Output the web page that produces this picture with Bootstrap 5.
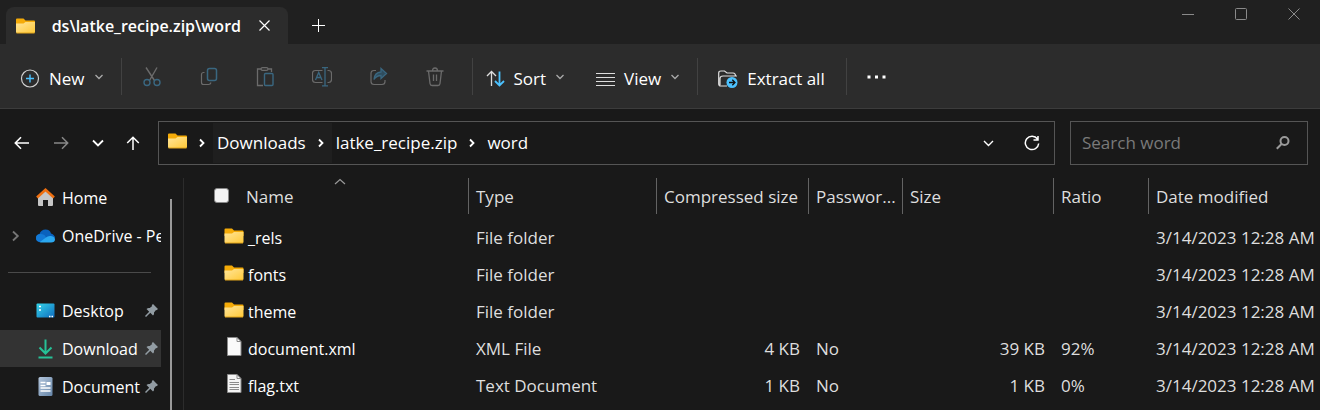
<!DOCTYPE html>
<html lang="en" data-bs-theme="dark">
<head>
<meta charset="utf-8">
<meta name="viewport" content="width=device-width, initial-scale=1">
<title>latke_recipe.zip\word</title>
<link href="https://cdn.jsdelivr.net/npm/bootstrap@5.3.0/dist/css/bootstrap.min.css" rel="stylesheet">
<style>
  body { background: #191919; color: #fff; font-family: "Open Sans", "Noto Sans", sans-serif; font-size: 17px; line-height: 24px; overflow: hidden; }
  svg { display: block; flex: none; fill: none; stroke: currentColor; }
  .plain-btn { background: none; border: 0; padding: 0; color: inherit; display: flex; align-items: center; justify-content: center; }
  .titlebar { background: #202020; height: 44px; padding-left: 6px; }
  .file-tab { background: #2c2c2c; border-radius: 8px 8px 0 0; width: 282px; height: 37px; padding: 0 18px 0 10px; }
  .tab-label { width: 194px; height: 24px; margin-left: 12px; font-weight: 600; font-size: 16px; }
  .win-controls { color: #8a8a8a; height: 28px; }
  .win-controls .plain-btn { width: 53px; }
  .commands { background: #2c2c2c; height: 65px; border-bottom: 1px solid #3c3c3c; padding: 5px 0 0 20px; }
  .commands .rule { width: 1px; height: 37px; background: #424242; margin: -4px 0 0 17px; }
  .commands .icon-cmds + .rule { margin-left: 0; }
  .commands .rule.wide { margin-left: 21px; }
  .cmd { gap: 9px; height: 36px; }
  .rule + .cmd { margin-left: 20px; }
  .rule + .cmd.sort { margin-left: 13px; }
  .cmd + .cmd { margin-left: 31px; }
  .icon-cmds { width: 350px; padding: 0 8px 0 2px; color: #6b6b6b; }
  .icon-cmds .plain-btn { flex: 1; height: 36px; padding-bottom: 4px; }
  .accent { stroke: #4cc2ff; }
  .dimmed { stroke: #3a6780; }
  .more { color: #aaa; margin-bottom: 4px; }
  .navrow { height: 69px; padding: 12px 12px 0 12px; }
  .nav-arrows { width: 146px; height: 44px; }
  .nav-arrows .plain-btn { width: 18px; margin-right: 22px; }
  .nav-arrows .recent { width: 12px; margin: 0 20px 0 0; }
  .nav-arrows .off { color: #888; }
  .box { border: 1px solid #555; height: 44px; }
  .address { padding-left: 9px; }
  .address .refresh { margin: 0 14px 0 30px; }
  .crumb { color: #fff; text-decoration: none; padding: 0 4px; height: 40px; display: flex; align-items: center; }
  .crumb.lit, .crumb-sep.lit { background: #1f1f1f; }
  .crumb-sep { width: 22px; height: 40px; display: flex; align-items: center; justify-content: center; }
  .search { width: 238px; margin-left: 15px; }
  .search input { background: none; border: 0; outline: 0; color: #fff; width: 180px; padding: 0 0 0 11px; }
  .search input::placeholder { color: #7a7a7a; opacity: 1; }
  .search svg { margin-right: 17px; color: #9a9a9a; }
  .sidebar { flex: none; width: 183px; font-size: 16px; }
  .side-list { width: 161px; padding-top: 1px; }
  .side-item { height: 37px; margin-bottom: 1px; color: #fff; text-decoration: none; display: flex; align-items: center; padding-left: 8px; }
  .side-item.chosen { background: #333; }
  .side-item .twist { width: 28px; color: #777; padding-left: 4px; }
  .side-item .glyph { width: 20px; margin-right: 6px; }
  .side-item .words { flex: 1; min-width: 0; overflow: hidden; white-space: nowrap; }
  .side-item .pin { margin: 0 3px; fill: #929ca3; stroke: none; }
  .side-rule { border: 0; border-top: 1px solid #4a4a4a; opacity: 1; margin: 18px 10px 19px 8px; }
  .thumb { width: 2px; background: #9a9a9a; margin: 21px 0 0 9px; }
  .files { border-left: 1px solid #2c2c2c; }
  .file-table { table-layout: fixed; width: 100%; color: #dedede; }
  .file-table th { font-weight: 400; height: 36px; padding: 0; }
  .head-cell { height: 36px; padding: 1px 0 0 7px; border-right: 1px solid #636363; white-space: nowrap; display: flex; align-items: center; }
  .file-table th:last-child .head-cell { border: 0; }
  .file-table tbody::before { content: ""; display: block; height: 5px; }
  .file-table td { height: 37px; padding: 0 7px; white-space: nowrap; }
  .file-table td:first-child { color: #fff; padding-left: 40px; font-size: 16px; }
  .file-table .size-cell { text-align: right; padding-right: 9px; }
  .col-name { width: 285px; } .col-type { width: 188px; } .col-packed { width: 152px; } .col-lock { width: 94px; } .col-size { width: 151px; } .col-ratio { width: 95px; }
  .head-cell.name-head { padding-left: 30px; }
  .pick { appearance: none; width: 15px; height: 15px; border: 1px solid #888; border-radius: 3px; background: #f3f3f3; margin: 0 17px 2px 0; }
  .sort-mark { left: 150px; top: 0; }
</style>
</head>
<body class="vh-100 d-flex flex-column">

<svg width="0" height="0" class="position-absolute" aria-hidden="true">
  <defs>
    <linearGradient id="gold" x1="0" y1="0" x2="1" y2="1"><stop offset="0" stop-color="#ffe59a"/><stop offset="1" stop-color="#ffc938"/></linearGradient>
    <linearGradient id="screen" x1="0" y1="0" x2="1" y2="1"><stop offset="0" stop-color="#35d5ea"/><stop offset="1" stop-color="#0f6cbf"/></linearGradient>
    <linearGradient id="paper" x1="0" y1="0" x2="1" y2="1"><stop offset="0" stop-color="#b4c6dc"/><stop offset="1" stop-color="#6585a8"/></linearGradient>
    <symbol id="folder" viewBox="0 0 19 16"><path d="M0 1.500Q0 .5 1 .5h6.500L9.500 2.500H18q1 0 1 1V8H0z" fill="#f5ab08" stroke="none"/><path d="M0 5.500h7.500L9.500 4H19v10q0 1-1 1H1q-1 0-1-1z" fill="url(#gold)" stroke="none"/><path d="M.5 15h18" stroke="#e3a61a"/></symbol>
    <symbol id="chev" viewBox="0 0 10 6"><path d="M1.500 1 5 4.500 8.500 1" stroke-width="1.300"/></symbol>
    <symbol id="angle" viewBox="0 0 6 10"><path d="M1 1.500 4.500 5 1 8.500" stroke-width="1.800"/></symbol>
    <symbol id="pin" viewBox="0 0 13 13"><path d="M8 0 13 5 11.500 6.300 11 6 9 8.500Q9.500 10.500 8 11.500L5.300 8.800 1 13 0 12 4.200 7.700 1.500 5Q3 3.500 4.800 4L7.200 2 6.700 1.300z"/></symbol>
  </defs>
</svg>

<header class="titlebar d-flex align-items-end">
  <div class="file-tab d-flex align-items-center">
    <svg width="19" height="16"><use href="#folder"/></svg>
    <div class="tab-label d-flex justify-content-end overflow-hidden text-nowrap me-auto"><span>ds\latke_recipe.zip\word</span></div>
    <button class="plain-btn" aria-label="Close tab"><svg width="11" height="11"><path d="M.5.5l10 10M10.500.5l-10 10" stroke-width="1.200"/></svg></button>
  </div>
  <button class="plain-btn ms-4 mb-2 pb-1" aria-label="New tab"><svg width="13" height="13"><path d="M6.500 0v13M0 6.500h13"/></svg></button>
  <div class="win-controls d-flex align-self-start ms-auto">
    <button class="plain-btn" aria-label="Minimize"><svg width="12" height="12"><path d="M0 6.500h12"/></svg></button>
    <button class="plain-btn" aria-label="Maximize"><svg width="12" height="12"><rect x=".5" y=".5" width="11" height="11" rx="1"/></svg></button>
    <button class="plain-btn" aria-label="Close"><svg width="12" height="12"><path d="M.5.5l11 11M11.500.5l-11 11"/></svg></button>
  </div>
</header>

<div class="commands d-flex align-items-center">
  <button class="plain-btn cmd">
    <svg width="20" height="20"><circle cx="10" cy="9.500" r="8.500" stroke="#d0d0d0" stroke-width="1.200"/><path d="M10 5.500v8M6 9.500h8" class="accent" stroke-width="1.400"/></svg>
    New
    <svg width="10" height="6" class="more"><use href="#chev"/></svg>
  </button>
  <span class="rule"></span>
  <div class="icon-cmds d-flex">
    <button class="plain-btn" aria-label="Cut"><svg width="18" height="20"><path d="M3 .5 11.500 13.500M14 .5 6.500 13.500" stroke-width="1.400"/><g class="dimmed" stroke-width="1.400"><circle cx="4" cy="15.500" r="3"/><circle cx="14" cy="15.500" r="3"/></g></svg></button>
    <button class="plain-btn" aria-label="Copy"><svg width="18" height="20"><path d="M4.500 5.500H3.500a2 2 0 0 0-2 2v8q0 2 2 2h5q2 0 2.500-2" stroke-width="1.200"/><rect x="7.500" y="1.500" width="9" height="12" rx="2" class="dimmed" stroke-width="1.500"/></svg></button>
    <button class="plain-btn" aria-label="Paste"><svg width="18" height="20"><path d="M4.500 2H1.500v16.500H7M12 2h3.500v3M5 2Q5 .7 6.500.7h4Q12 .7 12 2T10.500 3.300h-4Q5 3.300 5 2z" stroke-width="1.300"/><rect x="8.500" y="6.500" width="8.500" height="12" rx="1" class="dimmed" stroke-width="1.400"/></svg></button>
    <button class="plain-btn" aria-label="Rename"><svg width="20" height="20"><path d="M10.500 3.500H3.500q-3 0-3 3v6q0 3 3 3h7M15.500 3.500h1q3 0 3 3v6q0 3-3 3h-1" stroke-width="1.200"/><path d="M13 1v17.500M10 .7h6M10 18.800h6M3.500 13 6.700 5.500 10 13M4.800 10.500h3.800" class="dimmed" stroke-width="1.300"/></svg></button>
    <button class="plain-btn" aria-label="Share"><svg width="18" height="20"><path d="M6 3.500H4q-3 0-3 3v8q0 3 3 3h8q3 0 3-3V13" stroke-width="1.200"/><path d="M11 5V1.500l5.500 5-5.500 5V8.500Q6.500 8.500 4 12.500 4.500 5.500 11 5z" class="dimmed" fill="#2f4d5e" stroke-width="1.300"/></svg></button>
    <button class="plain-btn" aria-label="Delete"><svg width="18" height="20"><path d="M.5 4h17M6.500 4Q6.500 1 9 1t2.500 3M2.500 4 4 16.500q.2 2 2 2h6q1.800 0 2-2L15.500 4M7.500 7.500V14M10.500 7.500V14" stroke-width="1.300"/></svg></button>
  </div>
  <span class="rule"></span>
  <button class="plain-btn cmd sort">
    <svg width="19" height="18"><path d="M5.500 16V2M1 6l4.500-4.500L10 6" stroke="#ddd" stroke-width="1.300"/><path d="M13.500 1.500V15M9 11l4.500 4.500L18 11" class="accent" stroke-width="1.800"/></svg>
    Sort
    <svg width="10" height="6" class="more"><use href="#chev"/></svg>
  </button>
  <button class="plain-btn cmd">
    <svg width="19" height="14"><path d="M0 1.500h19M0 5.500h19M0 9.500h19M0 13.500h19" stroke="#ddd"/></svg>
    View
    <svg width="10" height="6" class="more"><use href="#chev"/></svg>
  </button>
  <span class="rule"></span>
  <button class="plain-btn cmd">
    <svg width="20" height="18"><path d="M9 16H3Q.7 16 .7 14V3Q.7 1 3 1h3.500l2.500 2h6q2.500 0 2.500 3M2 15V8.500Q2 6 5 6h14" stroke="#ddd" stroke-width="1.200"/><circle cx="14" cy="12.500" r="5.500" fill="#4cc2ff" stroke="none"/><path d="M11 12.500h6M14.300 9.800 17 12.500l-2.700 2.700" stroke="#111" stroke-width="1.300"/></svg>
    Extract all
  </button>
  <span class="rule wide"></span>
  <button class="plain-btn cmd" aria-label="See more"><svg width="20" height="4" class="mb-1"><path d="M.5 2h3M8 2h3M15.500 2h3" stroke="#fff" stroke-width="3"/></svg></button>
</div>

<div class="navrow d-flex">
  <div class="nav-arrows d-flex align-items-center">
    <button class="plain-btn" aria-label="Back"><svg width="15" height="14"><path d="M15 7H1.500M7 1.200 1.300 7 7 12.800" stroke-width="1.600"/></svg></button>
    <button class="plain-btn off" aria-label="Forward"><svg width="15" height="14"><path d="M0 7h13.500M8 1.200 13.700 7 8 12.800" stroke-width="1.500"/></svg></button>
    <button class="plain-btn recent" aria-label="Recent locations"><svg width="12" height="8"><path d="M1 1.500 6 6.500l5-5" stroke-width="1.800"/></svg></button>
    <button class="plain-btn me-0" aria-label="Up"><svg width="14" height="14"><path d="M7 14V1.500M1.200 7 7 1.200 12.800 7" stroke-width="1.500"/></svg></button>
  </div>
  <nav class="box address flex-fill d-flex align-items-center" aria-label="Address">
    <svg width="19" height="16" class="mb-1"><use href="#folder"/></svg>
    <span class="crumb-sep ms-1"><svg width="6" height="10"><use href="#angle"/></svg></span>
    <a class="crumb lit" href="#">Downloads</a>
    <span class="crumb-sep lit"><svg width="6" height="10"><use href="#angle"/></svg></span>
    <a class="crumb" href="#">latke_recipe.zip</a>
    <span class="crumb-sep"><svg width="6" height="10"><use href="#angle"/></svg></span>
    <a class="crumb" href="#">word</a>
    <button class="plain-btn ms-auto" aria-label="Previous locations"><svg width="11" height="7"><path d="M1 1 5.500 5.500 10 1" stroke-width="1.400"/></svg></button>
    <button class="plain-btn refresh" aria-label="Refresh"><svg width="16" height="16"><path d="M13.500 4A6.700 6.700 0 1 0 14.700 8.500M14 1v4h-4.500" stroke-width="1.500"/></svg></button>
  </nav>
  <form class="search box d-flex align-items-center justify-content-between">
    <input type="text" placeholder="Search word" aria-label="Search word">
    <svg width="14" height="14"><circle cx="8.500" cy="5" r="4" stroke-width="2"/><path d="M5.500 8 .8 12.800" stroke-width="2"/></svg>
  </form>
</div>

<main class="flex-fill d-flex">
  <aside class="sidebar d-flex">
    <nav class="side-list" aria-label="Folders">
      <a class="side-item" href="#"><span class="twist"></span><span class="glyph"><svg width="19" height="19"><path d="M2 8.500 9.500 2 17 8.500V17q0 1-1 1h-4v-6H7v6H3q-1 0-1-1z" fill="#c6c6c6" stroke="none"/><path d="M1 9.500 9.500 1.800 18 9.500" stroke="#ee6f10" stroke-width="2.600"/></svg></span><span class="words">Home</span></a>
      <a class="side-item" href="#"><span class="twist"><svg width="8" height="12"><path d="M1 1.500 5.800 6 1 10.500" stroke-width="1.800"/></svg></span><span class="glyph"><svg width="19" height="14" stroke="none"><path d="M4 13Q0 12.500 0 9T3.500 5Q5 .5 9.500.5 14 .5 15 4.500 19 6 19 9z" fill="#0a62bd" stroke="none"/><path d="M3.500 13Q0 12.500 0 9T4 5Q7 4.500 9 6.500L12 13z" fill="#137ad6" stroke="none"/><path d="M3.500 13.200 10 8.500q2-2 5-1.500 4 .5 4 3.500 0 3-4 3H5z" fill="#2ba8f0" stroke="none"/></svg></span><span class="words">OneDrive - Pe</span></a>
      <hr class="side-rule">
      <a class="side-item" href="#"><span class="twist"></span><span class="glyph"><svg width="19" height="15"><rect x=".5" y=".5" width="18" height="14" rx="1" fill="url(#screen)" stroke="none"/><path d="M3 3.500h2M3 7h2M13 13.500h1.500M15.500 13.500H17" stroke="#fff" stroke-width="1.700"/></svg></span><span class="words">Desktop</span><svg class="pin" width="13" height="13"><use href="#pin"/></svg></a>
      <a class="side-item chosen" href="#"><span class="twist"></span><span class="glyph"><svg width="19" height="20"><path d="M9.500.5V14M3.500 8.500l6 6 6-6M2.500 18.500h14" stroke="#26c197" stroke-width="2"/></svg></span><span class="words">Download</span><svg class="pin" width="13" height="13"><use href="#pin"/></svg></a>
      <a class="side-item" href="#"><span class="twist"></span><span class="glyph"><svg width="19" height="19"><rect x="2.500" width="14" height="19" rx="1.500" fill="url(#paper)" stroke="none"/><path d="M4.500 5.500h5M4.500 8.500h5M4.500 11h10M4.500 14h10" stroke="#fff" stroke-width="1.400"/><path d="M10.500 6.500h4" stroke="#fff" stroke-width="3"/></svg></span><span class="words">Document</span><svg class="pin" width="13" height="13"><use href="#pin"/></svg></a>
    </nav>
    <div class="thumb"></div>
  </aside>

  <section class="files flex-fill">
    <table class="file-table">
      <colgroup><col class="col-name"><col class="col-type"><col class="col-packed"><col class="col-lock"><col class="col-size"><col class="col-ratio"><col></colgroup>
      <thead>
        <tr>
          <th class="position-relative"><div class="head-cell name-head"><input type="checkbox" class="pick" aria-label="Select all">Name</div><svg class="sort-mark position-absolute" width="12" height="7"><path d="M1 6 6 1.500 11 6" stroke="#999" stroke-width="1.200"/></svg></th>
          <th><div class="head-cell">Type</div></th>
          <th><div class="head-cell">Compressed size</div></th>
          <th><div class="head-cell">Passwor...</div></th>
          <th><div class="head-cell">Size</div></th>
          <th><div class="head-cell">Ratio</div></th>
          <th><div class="head-cell">Date modified</div></th>
        </tr>
      </thead>
      <tbody>
        <tr><td><div class="d-flex align-items-center gap-1"><svg width="20" height="16" class="mb-1"><use href="#folder"/></svg>_rels</div></td><td>File folder</td><td></td><td></td><td></td><td></td><td>3/14/2023 12:28 AM</td></tr>
        <tr><td><div class="d-flex align-items-center gap-1"><svg width="20" height="16" class="mb-1"><use href="#folder"/></svg>fonts</div></td><td>File folder</td><td></td><td></td><td></td><td></td><td>3/14/2023 12:28 AM</td></tr>
        <tr><td><div class="d-flex align-items-center gap-1"><svg width="20" height="16" class="mb-1"><use href="#folder"/></svg>theme</div></td><td>File folder</td><td></td><td></td><td></td><td></td><td>3/14/2023 12:28 AM</td></tr>
        <tr><td><div class="d-flex align-items-center gap-1"><svg width="20" height="19" class="mb-1"><path d="M3.500.5h9.500l4 4v14H3.500z" fill="#fafafa" stroke="#8a8a8a"/><path d="M13 .5v4h4" stroke="#8a8a8a"/></svg>document.xml</div></td><td>XML File</td><td class="size-cell">4 KB</td><td>No</td><td class="size-cell">39 KB</td><td>92%</td><td>3/14/2023 12:28 AM</td></tr>
        <tr><td><div class="d-flex align-items-center gap-1"><svg width="20" height="19" class="mb-1"><path d="M3.500.5h9.500l4 4v14H3.500z" fill="#f4f4f4" stroke="#8a8a8a"/><path d="M13 .5v4h4M5.500 5.500H11M5.500 8.500h9.500M5.500 10.500h9.500M5.500 13.500h9.500M5.500 15.500h9.500" stroke="#8a8a8a"/></svg>flag.txt</div></td><td>Text Document</td><td class="size-cell">1 KB</td><td>No</td><td class="size-cell">1 KB</td><td>0%</td><td>3/14/2023 12:28 AM</td></tr>
      </tbody>
    </table>
  </section>
</main>

<script src="https://cdn.jsdelivr.net/npm/bootstrap@5.3.0/dist/js/bootstrap.bundle.min.js"></script>
</body>
</html>
